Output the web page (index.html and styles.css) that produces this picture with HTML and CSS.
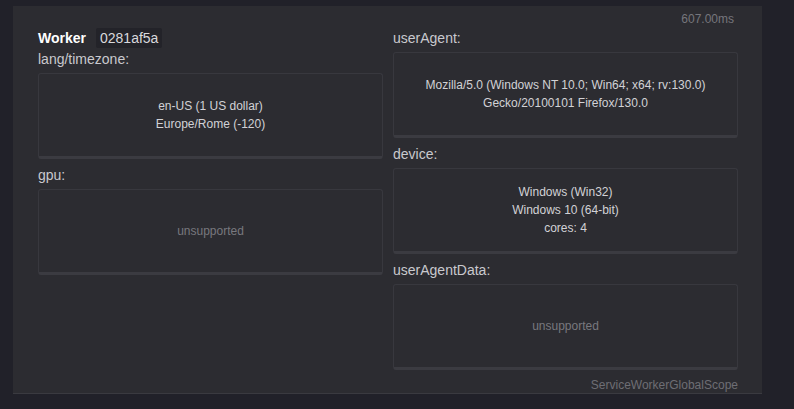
FILE: index.html
```html
<!DOCTYPE html>
<html>
<head>
<meta charset="utf-8">
<link rel="stylesheet" href="styles.css">
</head>
<body>
<div class="panel">
  <div class="timing">607.00ms</div>
  <div class="columns">
    <div class="col">
      <div class="head"><span class="title">Worker</span><span class="badge">0281af5a</span></div>
      <div class="label first">lang/timezone:</div>
      <div class="box"><div>en-US (1 US dollar)</div><div>Europe/Rome (-120)</div></div>
      <div class="label">gpu:</div>
      <div class="box muted"><div>unsupported</div></div>
    </div>
    <div class="col">
      <div class="label first">userAgent:</div>
      <div class="box"><div>Mozilla/5.0 (Windows NT 10.0; Win64; x64; rv:130.0)</div><div>Gecko/20100101 Firefox/130.0</div></div>
      <div class="label">device:</div>
      <div class="box"><div>Windows (Win32)</div><div>Windows 10 (64-bit)</div><div>cores: 4</div></div>
      <div class="label">userAgentData:</div>
      <div class="box muted"><div>unsupported</div></div>
    </div>
  </div>
  <div class="scope">ServiceWorkerGlobalScope</div>
</div>
</body>
</html>
```
FILE: styles.css
```css
html, body {
  margin: 0;
  padding: 0;
  background: #212129;
  font-family: "Liberation Sans", Arial, sans-serif;
  height: 100%;
}
body {
  padding: 6px 32px 0 13px;
  box-sizing: border-box;
}
.panel {
  background: #2c2c31;
  border-bottom: 1px solid #3a3a40;
  padding: 5px 24px 0 25px;
  height: 388px;
  box-sizing: border-box;
}
.timing {
  text-align: right;
  font-size: 12px;
  line-height: 16px;
  color: #76767c;
  padding-right: 4px;
  margin-bottom: 1px;
}
.columns {
  display: grid;
  grid-template-columns: 345px 345px;
  column-gap: 10px;
}
.col {
  display: flex;
  flex-direction: column;
}
.head {
  display: flex;
  align-items: center;
  height: 20px;
  margin-bottom: 1px;
}
.title {
  font-weight: bold;
  font-size: 14px;
  color: #ffffff;
}
.badge {
  margin-left: 10px;
  background: #232329;
  color: #d8d8dc;
  font-size: 14px;
  line-height: 20px;
  padding: 0 4px;
  border-radius: 2px;
}
.label {
  font-size: 14px;
  line-height: 20px;
  color: #c9c9ce;
  margin-top: 6px;
  margin-bottom: 4px;
}
.label.first {
  margin-top: 0;
}
.box {
  height: 86px;
  box-sizing: border-box;
  border: 1px solid #38383e;
  border-bottom: 3px solid #3b3b41;
  border-radius: 3px;
  display: flex;
  flex-direction: column;
  justify-content: center;
  align-items: center;
  font-size: 12px;
  line-height: 18px;
  color: #d2d2d6;
  text-align: center;
}
.box.muted {
  color: #78787e;
}
.scope {
  text-align: right;
  font-size: 12px;
  line-height: 16px;
  color: #6e6e74;
  margin-top: 7px;
}
```
